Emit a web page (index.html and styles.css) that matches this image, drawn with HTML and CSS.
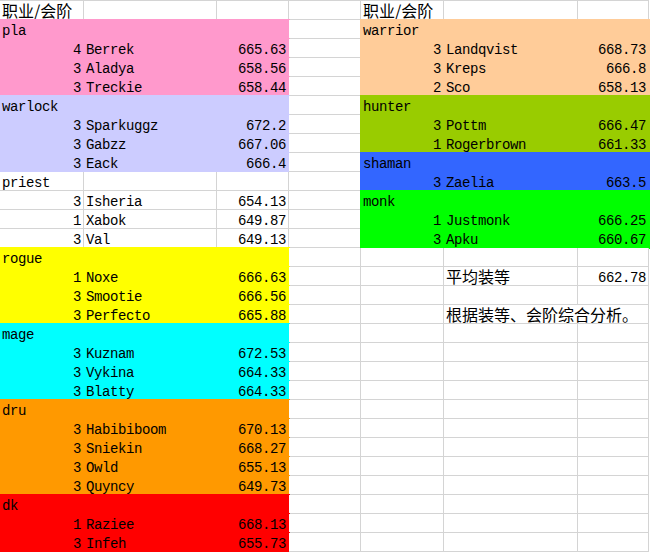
FILE: index.html
```html
<!DOCTYPE html>
<html lang="zh">
<head>
<meta charset="utf-8">
<title>职业/会阶</title>
<link rel="stylesheet" href="styles.css">
</head>
<body>
<div class="sheet">
<div class="c cjk">职业/会阶</div><div class="c"></div><div class="c"></div><div class="c"></div><div class="c cjk">职业/会阶</div><div class="c"></div><div class="c"></div>
<div class="c pk">pla</div><div class="c pk"></div><div class="c pk"></div><div class="c"></div><div class="c pe">warrior</div><div class="c pe"></div><div class="c pe"></div>
<div class="c pk r">4</div><div class="c pk">Berrek</div><div class="c pk r">665.63</div><div class="c"></div><div class="c pe r">3</div><div class="c pe">Landqvist</div><div class="c pe r">668.73</div>
<div class="c pk r">3</div><div class="c pk">Aladya</div><div class="c pk r">658.56</div><div class="c"></div><div class="c pe r">3</div><div class="c pe">Kreps</div><div class="c pe r">666.8</div>
<div class="c pk r">3</div><div class="c pk">Treckie</div><div class="c pk r">658.44</div><div class="c"></div><div class="c pe r">2</div><div class="c pe">Sco</div><div class="c pe r">658.13</div>
<div class="c lv">warlock</div><div class="c lv"></div><div class="c lv"></div><div class="c"></div><div class="c ol">hunter</div><div class="c ol"></div><div class="c ol"></div>
<div class="c lv r">3</div><div class="c lv">Sparkuggz</div><div class="c lv r">672.2</div><div class="c"></div><div class="c ol r">3</div><div class="c ol">Pottm</div><div class="c ol r">666.47</div>
<div class="c lv r">3</div><div class="c lv">Gabzz</div><div class="c lv r">667.06</div><div class="c"></div><div class="c ol r">1</div><div class="c ol">Rogerbrown</div><div class="c ol r">661.33</div>
<div class="c lv r">3</div><div class="c lv">Eack</div><div class="c lv r">666.4</div><div class="c"></div><div class="c bl">shaman</div><div class="c bl"></div><div class="c bl"></div>
<div class="c">priest</div><div class="c"></div><div class="c"></div><div class="c"></div><div class="c bl r">3</div><div class="c bl">Zaelia</div><div class="c bl r">663.5</div>
<div class="c r">3</div><div class="c">Isheria</div><div class="c r">654.13</div><div class="c"></div><div class="c gr">monk</div><div class="c gr"></div><div class="c gr"></div>
<div class="c r">1</div><div class="c">Xabok</div><div class="c r">649.87</div><div class="c"></div><div class="c gr r">1</div><div class="c gr">Justmonk</div><div class="c gr r">666.25</div>
<div class="c r">3</div><div class="c">Val</div><div class="c r">649.13</div><div class="c"></div><div class="c gr r">3</div><div class="c gr">Apku</div><div class="c gr r">660.67</div>
<div class="c ye">rogue</div><div class="c ye"></div><div class="c ye"></div><div class="c"></div><div class="c"></div><div class="c"></div><div class="c"></div>
<div class="c ye r">1</div><div class="c ye">Noxe</div><div class="c ye r">666.63</div><div class="c"></div><div class="c"></div><div class="c cjk">平均装等</div><div class="c r">662.78</div>
<div class="c ye r">3</div><div class="c ye">Smootie</div><div class="c ye r">666.56</div><div class="c"></div><div class="c"></div><div class="c"></div><div class="c"></div>
<div class="c ye r">3</div><div class="c ye">Perfecto</div><div class="c ye r">665.88</div><div class="c"></div><div class="c"></div><div class="c cjk w2">根据装等、会阶综合分析。</div>
<div class="c cy">mage</div><div class="c cy"></div><div class="c cy"></div><div class="c"></div><div class="c"></div><div class="c"></div><div class="c"></div>
<div class="c cy r">3</div><div class="c cy">Kuznam</div><div class="c cy r">672.53</div><div class="c"></div><div class="c"></div><div class="c"></div><div class="c"></div>
<div class="c cy r">3</div><div class="c cy">Vykina</div><div class="c cy r">664.33</div><div class="c"></div><div class="c"></div><div class="c"></div><div class="c"></div>
<div class="c cy r">3</div><div class="c cy">Blatty</div><div class="c cy r">664.33</div><div class="c"></div><div class="c"></div><div class="c"></div><div class="c"></div>
<div class="c or">dru</div><div class="c or"></div><div class="c or"></div><div class="c"></div><div class="c"></div><div class="c"></div><div class="c"></div>
<div class="c or r">3</div><div class="c or">Habibiboom</div><div class="c or r">670.13</div><div class="c"></div><div class="c"></div><div class="c"></div><div class="c"></div>
<div class="c or r">3</div><div class="c or">Sniekin</div><div class="c or r">668.27</div><div class="c"></div><div class="c"></div><div class="c"></div><div class="c"></div>
<div class="c or r">3</div><div class="c or">Owld</div><div class="c or r">655.13</div><div class="c"></div><div class="c"></div><div class="c"></div><div class="c"></div>
<div class="c or r">3</div><div class="c or">Quyncy</div><div class="c or r">649.73</div><div class="c"></div><div class="c"></div><div class="c"></div><div class="c"></div>
<div class="c rd">dk</div><div class="c rd"></div><div class="c rd"></div><div class="c"></div><div class="c"></div><div class="c"></div><div class="c"></div>
<div class="c rd r">1</div><div class="c rd">Raziee</div><div class="c rd r">668.13</div><div class="c"></div><div class="c"></div><div class="c"></div><div class="c"></div>
<div class="c rd r">3</div><div class="c rd">Infeh</div><div class="c rd r">655.73</div><div class="c"></div><div class="c"></div><div class="c"></div><div class="c"></div>
</div>
</body>
</html>
```
FILE: styles.css
```css
html, body {
  margin: 0;
  background: #fff;
}

.sheet {
  display: grid;
  grid-template-columns: 84px 133px 72px 72px 83px 134px 71px;
  grid-auto-rows: 19px;
  width: 649px;
  border-top: 1px solid #d4d4d4;
  font-family: "Liberation Mono", "Noto Sans CJK SC", monospace;
  font-size: 14px;
  letter-spacing: -0.4px;
  color: #000;
}

.c {
  box-sizing: border-box;
  height: 19px;
  border-right: 1px solid #d4d4d4;
  border-bottom: 1px solid #d4d4d4;
  background: #fff;
  line-height: 18px;
  padding: 2px 2px 0 2px;
  white-space: nowrap;
}

.r {
  text-align: right;
}

.cjk {
  font-family: "Noto Sans CJK SC", sans-serif;
  font-size: 16px;
  letter-spacing: 0;
  line-height: 18px;
  padding-top: 0;
}

.w2 {
  grid-column: span 2;
}

.pk { --f: #ff99cc; }
.lv { --f: #ccccff; }
.pe { --f: #ffcc99; }
.ol { --f: #99cc00; }
.bl { --f: #3366ff; }
.gr { --f: #00ff00; }
.ye { --f: #ffff00; }
.cy { --f: #00ffff; }
.or { --f: #ff9900; }
.rd { --f: #ff0000; }

.pk, .lv, .pe, .ol, .bl, .gr, .ye, .cy, .or, .rd {
  background: var(--f);
  border-color: var(--f);
  box-shadow: 0 0 0 1px var(--f);
}
```
